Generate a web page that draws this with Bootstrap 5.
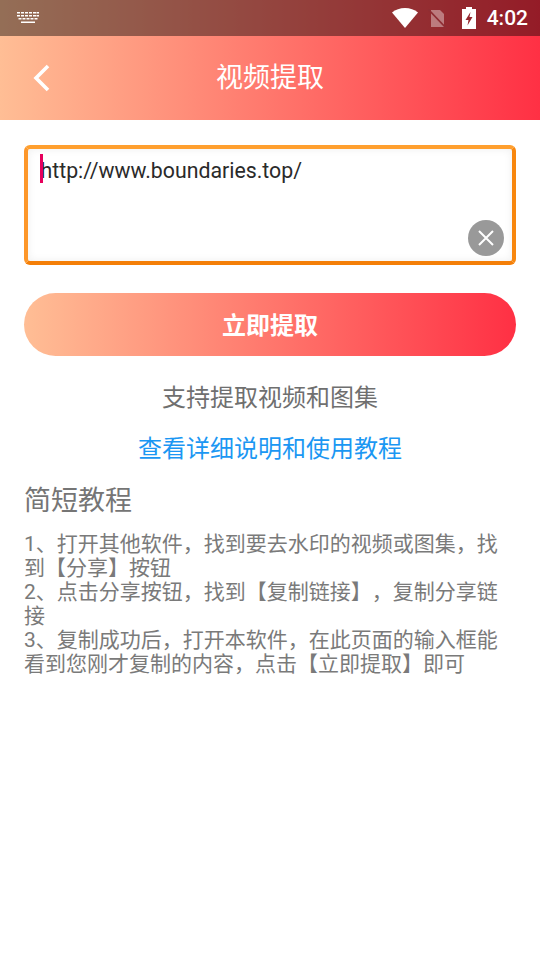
<!DOCTYPE html>
<html lang="zh">
<head>
<meta charset="utf-8">
<link href="https://cdn.jsdelivr.net/npm/bootstrap@5.3.0/dist/css/bootstrap.min.css" rel="stylesheet">
<style>
html,body{margin:0;background:#fff;}
body{width:540px;height:960px;overflow:hidden;font-family:Roboto,"Noto Sans CJK SC",sans-serif;text-spacing-trim:space-all;}
.hero-grad{background:linear-gradient(90deg,#ffbe95,#ff3044);}
.top-head{height:120px;}
.status-strip{height:36px;background:rgba(0,0,0,.42);padding:0 12px 0 17px;color:#fff;}
.clock{font-size:21px;font-weight:500;line-height:1;margin-left:11px;}
.title-row{height:84px;}
.back-slot{left:32px;top:50%;margin-top:-14px;line-height:0;}
.page-title{font-size:27px;color:#fff;line-height:1;}
.paste-box{height:120px;margin:25px 24px 0;border:4px solid;border-color:#ff9f2e #f8870e #f47f08 #fd972a;border-radius:6px;box-shadow:inset 0 0 8px rgba(0,0,0,.07);padding:4px 12.500px;}
.url-text{font-size:21.300px;color:#2a2a2a;line-height:36px;}
.caret-bar{left:12px;top:5px;width:3px;height:29px;background:#e6005c;}
.wipe-btn{right:8px;bottom:5px;width:36px;height:36px;border-radius:50%;background:#999;border:0;padding:0;}
.go-btn{display:block;width:492px;height:63px;margin:28px 24px 0;border:0;border-radius:32px;color:#fff;font-size:24px;font-weight:700;padding:2px 0 0;}
.hint-line{font-size:24px;line-height:32px;color:#6f6f6f;margin-top:26px;}
.guide-link{font-size:24px;line-height:32px;color:#1b97f3;margin-top:19px;text-decoration:none;display:block;}
.short-title{font-size:27px;line-height:34px;color:#757575;margin:19px 24px 0;}
.short-body{font-size:21px;line-height:24px;color:#7a7a7a;margin:14px 24px 0;width:492px;}
.sim-gap{margin:0 16px 0 10px;}
</style>
</head>
<body>
<header class="top-head hero-grad d-flex flex-column">
  <div class="status-strip d-flex align-items-center justify-content-between">
    <svg width="22" height="12" viewBox="0 0 22 12" fill="#fff" aria-hidden="true"><path d="M0 0h3v1.500H0zM4 0h3v1.500H4zM8 0h3v1.500H8zM12 0h3v1.500h-3zM16 0h3v1.500h-3zM19.500 0H22v1.500h-2.500zM0 3h3v1.500H0zM4 3h3v1.500H4zM8 3h3v1.500H8zM12 3h3v1.500h-3zM16 3h3v1.500h-3zM19.500 3H22v1.500h-2.500zM1.500 6h3v1.500h-3zM5.500 6h3v1.500h-3zM9.500 6h3v1.500h-3zM13.500 6h3v1.500h-3zM17.500 6h3v1.500h-3zM4 9.500h14V11H4z"/></svg>
    <div class="d-flex align-items-center">
      <svg width="26" height="20" viewBox="0 0 26 20" aria-hidden="true"><path d="M0 4.500C3.500 1.700 8 0 13 0s9.500 1.700 13 4.500L13 20z" fill="#fff"/></svg>
      <svg class="sim-gap" width="18" height="19" viewBox="0 0 18 19" aria-hidden="true"><path d="M3 1h9l4 4v13H3z" fill="#fff" fill-opacity=".38"/><path d="M0 0l18 19" stroke="#8f2d33" stroke-width="1.600"/></svg>
      <svg width="14" height="22" viewBox="0 0 14 22" aria-hidden="true"><path fill="#fff" fill-rule="evenodd" d="M4 0h6v2h4v20H0V2h4zM8.500 5L3.500 13H6.500L5.500 18.500 10.500 10H7.500z"/></svg>
      <span class="clock">4:02</span>
    </div>
  </div>
  <div class="title-row position-relative d-flex align-items-center justify-content-center">
    <span class="back-slot position-absolute"><svg width="20" height="28" viewBox="0 0 20 28" aria-hidden="true"><path d="M16 2L4 14l12 12" fill="none" stroke="#fff" stroke-width="3.600"/></svg></span>
    <span class="page-title">视频提取</span>
  </div>
</header>
<main>
  <div class="paste-box position-relative">
    <span class="caret-bar position-absolute"></span>
    <div class="url-text">http://www.boundaries.top/</div>
    <button class="wipe-btn position-absolute d-flex align-items-center justify-content-center" aria-label="清除"><svg width="18" height="18" viewBox="0 0 18 18" aria-hidden="true"><path d="M2 2l14 14M16 2L2 16" stroke="#fff" stroke-width="2" fill="none"/></svg></button>
  </div>
  <button class="go-btn hero-grad">立即提取</button>
  <p class="hint-line text-center mb-0">支持提取视频和图集</p>
  <a class="guide-link text-center" href="#">查看详细说明和使用教程</a>
  <h2 class="short-title fw-normal mb-0">简短教程</h2>
  <p class="short-body mb-0">1、打开其他软件，找到要去水印的视频或图集，找到【分享】按钮<br>2、点击分享按钮，找到【复制链接】，复制分享链接<br>3、复制成功后，打开本软件，在此页面的输入框能看到您刚才复制的内容，点击【立即提取】即可</p>
</main>
<script src="https://cdn.jsdelivr.net/npm/bootstrap@5.3.0/dist/js/bootstrap.bundle.min.js"></script>
</body>
</html>
